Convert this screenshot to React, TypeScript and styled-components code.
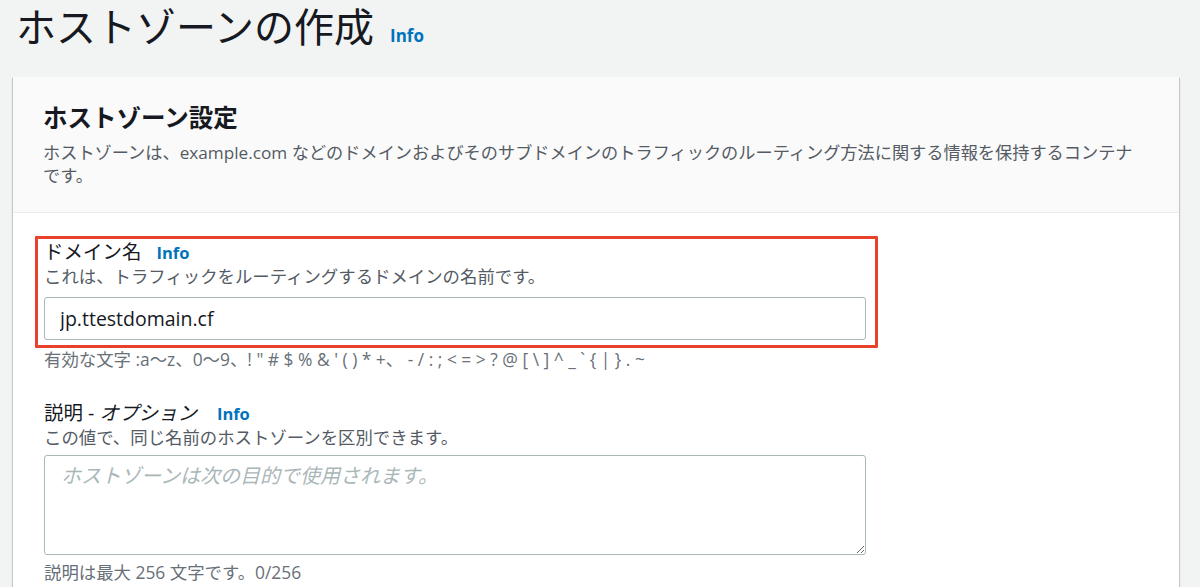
import React from 'react';
import styled, { createGlobalStyle } from 'styled-components';

const GlobalStyle = createGlobalStyle`
  html, body {
    margin: 0;
    padding: 0;
    background: #f2f3f3;
    font-family: 'Open Sans', 'Noto Sans CJK JP', sans-serif;
    color: #16191f;
  }
`;

const Page = styled.div`
  width: 1200px;
  height: 587px;
  overflow: hidden;
  padding-left: 13px;
  box-sizing: border-box;
`;

const TitleRow = styled.div`
  display: flex;
  align-items: baseline;
  gap: 16px;
  padding: 3px 0 0 3px;
  height: 77px;
  box-sizing: border-box;
`;

const Title = styled.h1`
  margin: 0;
  font-size: 40px;
  line-height: 48px;
  font-weight: 400;
  color: #16191f;
`;

const InfoLink = styled.a<{ size?: number }>`
  font-size: ${(p) => p.size || 16.5}px;
  font-weight: 700;
  color: #0073bb;
  text-decoration: none;
  cursor: pointer;
`;

const Card = styled.section`
  width: 1166px;
  background: #ffffff;
  box-shadow: 0 1px 1px 0 rgba(0, 28, 36, 0.3), 1px 1px 1px 0 rgba(0, 28, 36, 0.15),
    -1px 1px 1px 0 rgba(0, 28, 36, 0.15);
`;

const CardHeader = styled.header`
  background: #fafafa;
  border-bottom: 1px solid #eaeded;
  padding: 25px 30px 25px 30px;
`;

const CardTitle = styled.h2`
  margin: 0 0 7px;
  font-size: 24.5px;
  line-height: 32px;
  font-weight: 700;
`;

const CardDesc = styled.p`
  margin: 0;
  font-size: 17.2px;
  line-height: 23px;
  color: #545b64;
  width: 1100px;
`;

const CardBody = styled.div`
  padding: 23px 30px 40px 31px;
`;

const Field = styled.div<{ top?: number }>`
  width: 822px;
  margin-top: ${(p) => p.top || 0}px;
  display: flex;
  flex-direction: column;
`;

const Highlight = styled.div`
  margin: 0 -12px 0 -9px;
  padding: 1px 9px 5px 6px;
  border: 3px solid #e8412c;
  border-radius: 1px;
`;

const Label = styled.div<{ gap?: number }>`
  display: flex;
  align-items: baseline;
  gap: ${(p) => p.gap || 15}px;
  font-size: 19.5px;
  line-height: 24px;
  color: #16191f;
  em {
    font-style: italic;
  }
`;

const Description = styled.div`
  font-size: 17.4px;
  line-height: 22px;
  color: #545b64;
`;

const Input = styled.input`
  margin-top: 10px;
  height: 43px;
  box-sizing: border-box;
  border: 1px solid #aab7b8;
  border-radius: 3px;
  padding: 0 15px;
  font-family: inherit;
  font-size: 19.5px;
  color: #16191f;
  background: #ffffff;
  outline: none;
`;

const TextArea = styled.textarea`
  margin-top: 7px;
  height: 100px;
  box-sizing: border-box;
  border: 1px solid #aab7b8;
  border-radius: 3px;
  padding: 7px 16px;
  font-family: inherit;
  font-size: 20px;
  line-height: 26px;
  color: #16191f;
  background: #ffffff;
  outline: none;
  resize: vertical;
  &::placeholder {
    color: #aab7b8;
    font-style: italic;
  }
`;

const Constraint = styled.div<{ top?: number }>`
  margin-top: ${(p) => p.top || 0}px;
  font-size: 17.4px;
  line-height: 22px;
  color: #687078;
`;

export default function App() {
  return (
    <Page>
      <GlobalStyle />
      <TitleRow>
        <Title>ホストゾーンの作成</Title>
        <InfoLink size={17}>Info</InfoLink>
      </TitleRow>
      <Card>
        <CardHeader>
          <CardTitle>ホストゾーン設定</CardTitle>
          <CardDesc>
            ホストゾーンは、example.com などのドメインおよびそのサブドメインのトラフィックのルーティング方法に関する情報を保持するコンテナです。
          </CardDesc>
        </CardHeader>
        <CardBody>
          <Field>
            <Highlight>
              <Field>
                <Label>
                  ドメイン名 <InfoLink>Info</InfoLink>
                </Label>
                <Description>これは、トラフィックをルーティングするドメインの名前です。</Description>
                <Input defaultValue="jp.ttestdomain.cf" />
              </Field>
            </Highlight>
            <Constraint>
              有効な文字 :a〜z、0〜9、! " # $ % &amp; ' ( ) * +、 - / : ; &lt; = &gt; ? @ [ \ ] ^ _ ` {'{'} | {'}'} . ~
            </Constraint>
          </Field>
          <Field top={31}>
            <Label gap={20}>
              <span>
                説明 - <em>オプション</em>
              </span>
              <InfoLink>Info</InfoLink>
            </Label>
            <Description>この値で、同じ名前のホストゾーンを区別できます。</Description>
            <TextArea placeholder="ホストゾーンは次の目的で使用されます。" />
            <Constraint top={6}>説明は最大 256 文字です。0/256</Constraint>
          </Field>
        </CardBody>
      </Card>
    </Page>
  );
}
